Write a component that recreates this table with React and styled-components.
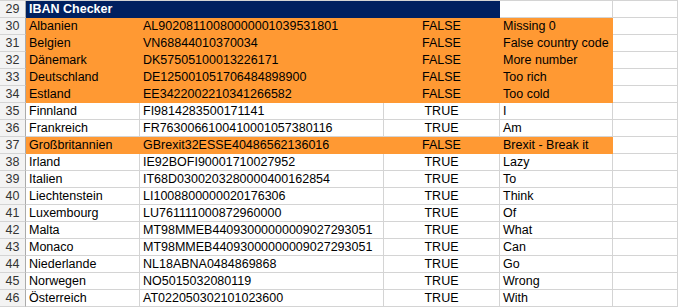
import React from "react";
import styled, { createGlobalStyle } from "styled-components";

const rows = [
  { n: 30, country: "Albanien", iban: "AL90208110080000001039531801", ok: false, note: "Missing 0" },
  { n: 31, country: "Belgien", iban: "VN68844010370034", ok: false, note: "False country code" },
  { n: 32, country: "Dänemark", iban: "DK5750510001322617 1".replace(" ", ""), ok: false, note: "More number" },
  { n: 33, country: "Deutschland", iban: "DE12500105170648489890 0".replace(" ", ""), ok: false, note: "Too rich" },
  { n: 34, country: "Estland", iban: "EE342200221034126658 2".replace(" ", ""), ok: false, note: "Too cold" },
  { n: 35, country: "Finnland", iban: "FI9814283500171141", ok: true, note: "I" },
  { n: 36, country: "Frankreich", iban: "FR7630066100410001057380116", ok: true, note: "Am" },
  { n: 37, country: "Großbritannien", iban: "GBrexit32ESSE40486562136016", ok: false, note: "Brexit - Break it" },
  { n: 38, country: "Irland", iban: "IE92BOFI90001710027952", ok: true, note: "Lazy" },
  { n: 39, country: "Italien", iban: "IT68D0300203280000400162854", ok: true, note: "To" },
  { n: 40, country: "Liechtenstein", iban: "LI1008800000020176306", ok: true, note: "Think" },
  { n: 41, country: "Luxembourg", iban: "LU761111000872960000", ok: true, note: "Of" },
  { n: 42, country: "Malta", iban: "MT98MMEB44093000000009027293051", ok: true, note: "What" },
  { n: 43, country: "Monaco", iban: "MT98MMEB44093000000009027293051", ok: true, note: "Can" },
  { n: 44, country: "Niederlande", iban: "NL18ABNA0484869868", ok: true, note: "Go" },
  { n: 45, country: "Norwegen", iban: "NO5015032080119", ok: true, note: "Wrong" },
  { n: 46, country: "Österreich", iban: "AT022050302101023600", ok: true, note: "With" },
];

const ORANGE = "#ff9933";
const NAVY = "#002060";
const GRID = "#d4d4d4";

function App() {
  return (
    <>
      <GlobalStyle />
      <Sheet>
        <Row>
          <RowHead>29</RowHead>
          <Cell $w={474} $fill={NAVY} $color="#fff" $bold>
            IBAN Checker
          </Cell>
          <Cell $w={113} />
          <Cell $grow />
        </Row>
        {rows.map((r) => {
          const fill = r.ok ? null : ORANGE;
          return (
            <Row key={r.n}>
              <RowHead>{r.n}</RowHead>
              <Cell $w={114} $fill={fill}>{r.country}</Cell>
              <Cell $w={244} $fill={fill}>{r.iban}</Cell>
              <Cell $w={116} $fill={fill} $align="center">
                {r.ok ? "TRUE" : "FALSE"}
              </Cell>
              <Cell $w={113} $fill={fill}>{r.note}</Cell>
              <Cell $grow />
            </Row>
          );
        })}
      </Sheet>
    </>
  );
}

const GlobalStyle = createGlobalStyle`
  html, body {
    margin:0;
    padding:0;
    background:#fff;
  }
  body {
    font-family:"Liberation Sans", Arial, sans-serif;
    font-size:12.5px;
    color:#000;
  }
`;

const Sheet = styled.div`
  width:678px;
  display:flex;
  flex-direction:column;
  border-top:1px solid ${GRID};
  overflow:hidden;
`;

const Row = styled.div`
  display:flex;
  height:17px;
`;

const RowHead = styled.div`
  flex:0 0 26px;
  box-sizing:border-box;
  background:#f3f3f3;
  color:#333;
  border-right:1px solid #ababab;
  border-bottom:1px solid ${GRID};
  text-align:center;
  line-height:16px;
`;

const Cell = styled.div`
  box-sizing:border-box;
  flex:${(p) => (p.$grow ? "1 1 auto" : `0 0 ${p.$w}px`)};
  padding:0 3px;
  line-height:16px;
  white-space:nowrap;
  overflow:hidden;
  text-align:${(p) => p.$align || "left"};
  font-weight:${(p) => (p.$bold ? 700 : 400)};
  color:${(p) => p.$color || "#000"};
  background:${(p) => p.$fill || "#fff"};
  border-right:1px solid ${(p) => p.$fill || GRID};
  border-bottom:1px solid ${(p) => p.$fill || GRID};
`;

export default App;
